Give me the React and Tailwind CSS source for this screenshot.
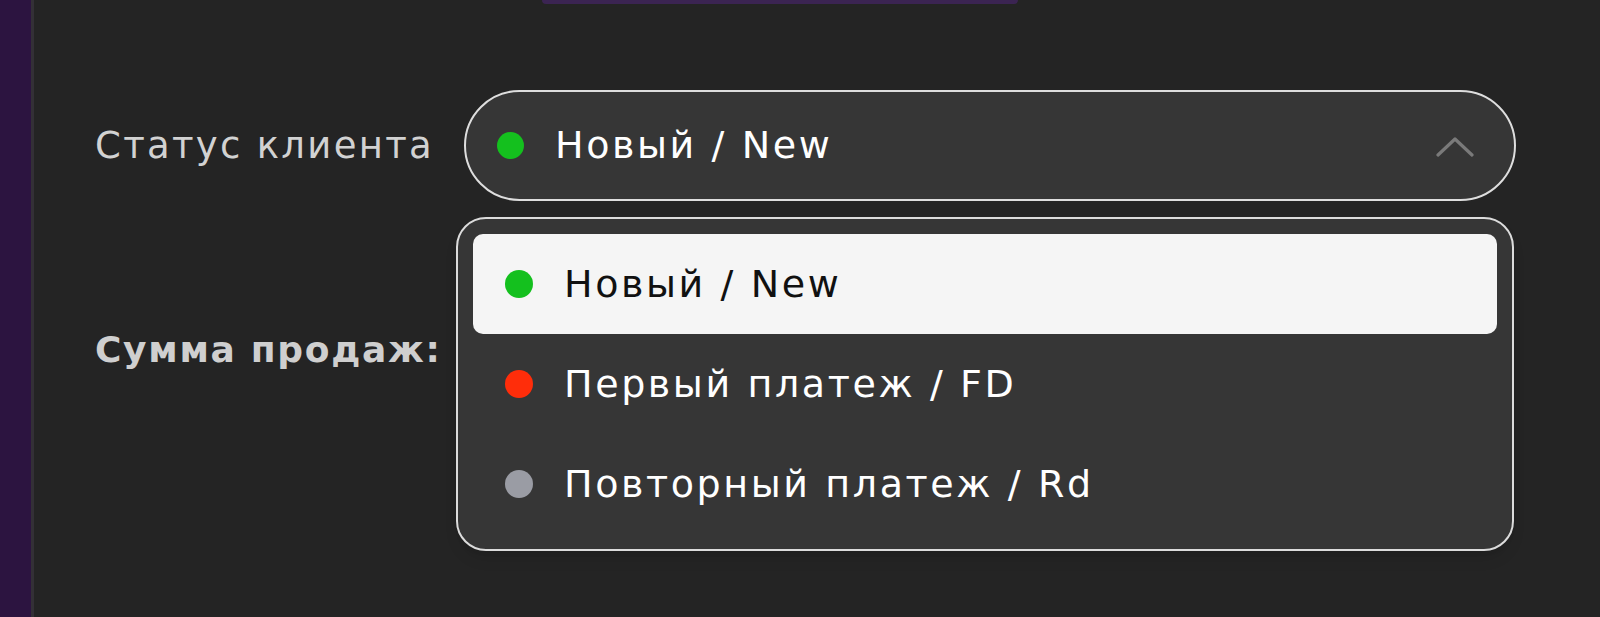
import React, { useState } from 'react';

const statuses = [
  { id: 'new', label: 'Новый / New', dot: 'bg-[#14c01e]' },
  { id: 'fd', label: 'Первый платеж / FD', dot: 'bg-[#ff2d0a]' },
  { id: 'rd', label: 'Повторный платеж / Rd', dot: 'bg-[#9a9ca4]' },
];

const ChevronUpWide = () => (
  <svg width="38" height="24" viewBox="0 0 38 24" fill="none" stroke="#7a7a7a" strokeWidth="3.2" strokeLinecap="round" strokeLinejoin="round">
    <polyline points="2,21 19,5 36,21" />
  </svg>
);

const App = () => {
  const [selected, setSelected] = useState('new');
  const current = statuses.find((s) => s.id === selected);

  return (
    <div className="flex h-[617px] w-full overflow-hidden bg-[#242424] font-['DejaVu_Sans',sans-serif]">
      {/* Sidebar edge */}
      <aside className="w-[34px] shrink-0 border-r-[3px] border-[#333036] bg-[#2c1440]" />

      <main className="relative flex-1">
        {/* Bottom of the action button above */}
        <div className="ml-[508px] h-[4px] w-[476px] rounded-b-xl bg-[#3b2452]" />

        <div className="grid grid-cols-[369px_1fr] items-center pl-[61px] pr-[84px] pt-[86px]">
          <span className="text-[37px] tracking-[2.3px] text-[#d2d2d2]">Статус клиента</span>
          <button className="flex h-[111px] items-center rounded-full border-2 border-[#dedede] bg-[#363636] pl-[31px] pr-[40px] text-left">
            <span className={`h-[27px] w-[27px] shrink-0 rounded-full ${current.dot}`} />
            <span className="ml-[31px] flex-1 text-[38px] tracking-[2.6px] text-white">{current.label}</span>
            <ChevronUpWide />
          </button>

          <span className="mt-[122px] text-[36px] font-semibold tracking-[1.7px] text-[#cfcfcf]">Сумма продаж:</span>
          <div />
        </div>

        {/* Dropdown menu */}
        <div className="absolute left-[422px] top-[217px] w-[1058px] rounded-[30px] border-2 border-[#dcdcdc] bg-[#363636] p-[15px] shadow-lg">
          {statuses.map((s) => (
            <div
              key={s.id}
              onClick={() => setSelected(s.id)}
              className={`flex h-[100px] items-center rounded-[10px] pl-[32px] ${
                s.id === selected ? 'bg-[#f5f5f5] text-[#111111]' : 'text-white'
              }`}
            >
              <span className={`h-[28px] w-[28px] shrink-0 rounded-full ${s.dot}`} />
              <span className="ml-[31px] text-[38px] tracking-[2.6px]">{s.label}</span>
            </div>
          ))}
        </div>
      </main>
    </div>
  );
};

export default App;
